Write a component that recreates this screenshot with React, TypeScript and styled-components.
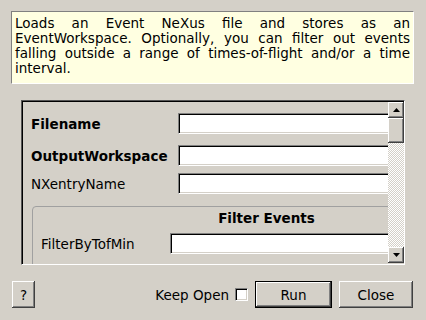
import React from 'react';
import styled, {createGlobalStyle, css} from 'styled-components';

const Global = createGlobalStyle`
  html, body {
    margin: 0;
    padding: 0;
    background: #d4d0c8;
  }
  * {
    box-sizing: border-box;
  }
`

const raised = css`
  background: #d4d0c8;
  border: none;
  box-shadow: inset -1px -1px #404040, inset 1px 1px #ffffff,
    inset -2px -2px #808080, inset 2px 2px #d4d0c8;
`

const sunken = css`
  background: #ffffff;
  border: 1px solid;
  border-color: #808080 #ffffff #ffffff #808080;
  box-shadow: inset 1px 1px #000000, inset -1px -1px #d4d0c8;
`

const Dialog = styled.div`
  width: 426px;
  height: 320px;
  padding: 11px 12px 0 11px;
  display: flex;
  flex-direction: column;
  font-family: "DejaVu Sans", Verdana, sans-serif;
  font-size: 13.5px;
  color: #000;
  overflow: hidden;
`

const Description = styled.div`
  height: 73px;
  padding: 4px 3px 0 3px;
  background: #ffffe1;
  border: 1px solid;
  border-color: #808080 #ffffff #ffffff #808080;
  line-height: 15px;
  text-align: justify;
`

const Frame = styled.div`
  margin: 16px 9px 0 10px;
  height: 165px;
  display: flex;
  border: 1px solid;
  border-color: #555555 #ffffff #ffffff #555555;
  box-shadow: inset 1px 1px #000000;
  padding: 1px 0 0 1px;
`

const Viewport = styled.div`
  flex: 1;
  overflow: hidden;
  padding: 11px 0 0 8px;
`

const Content = styled.div`
  width: 480px;
`

const Row = styled.div<{$top: number; $label: number}>`
  display: grid;
  grid-template-columns: ${p => p.$label}px 1fr;
  align-items: center;
  height: 21px;
  margin-top: ${p => p.$top}px;
`

const Label = styled.span<{$bold?: boolean}>`
  font-weight: ${p => (p.$bold ? 'bold' : 'normal')};
  white-space: nowrap;
`

const Field = styled.div`
  ${sunken};
  height: 21px;
`

const Group = styled.div`
  margin: 12px 0 0 1px;
  width: 469px;
  border: 1px solid #a0a0a0;
  border-radius: 4px;
  padding: 4px 0 0 8px;
  height: 80px;
`

const GroupTitle = styled.div`
  text-align: center;
  font-weight: bold;
  line-height: 15px;
  padding-right: 8px;
`

const ScrollBar = styled.div`
  width: 16px;
  display: flex;
  flex-direction: column;
  margin-bottom: 1px;
`

const ArrowButton = styled.div`
  ${raised};
  height: 16px;
  display: flex;
  align-items: center;
  justify-content: center;
`

const Thumb = styled.div`
  ${raised};
  height: 25px;
`

const Trough = styled.div`
  flex: 1;
  background: repeating-conic-gradient(#ffffff 0 25%, #d4d0c8 0 50%) 0 0 / 2px 2px;
`

const Buttons = styled.div`
  margin: 16px 1px 0 1px;
  display: flex;
  align-items: center;
`

const PushButton = styled.button<{$w: number; $left?: number; $default?: boolean}>`
  ${raised};
  width: ${p => p.$w}px;
  height: 27px;
  margin-left: ${p => p.$left ?? 0}px;
  font-family: inherit;
  font-size: 13.5px;
  color: #000;
  padding: 0;
  ${p =>
    p.$default &&
    css`
      box-shadow: inset 0 0 0 1px #000000, inset -2px -2px #404040,
        inset 2px 2px #ffffff, inset -3px -3px #808080;
    `}
`

const Spacer = styled.div`
  flex: 1;
`

const KeepOpen = styled.label`
  display: flex;
  align-items: center;
  gap: 6px;
  margin-right: 7px;
`

const Check = styled.span`
  ${sunken};
  width: 13px;
  height: 13px;
  display: inline-block;
`

function Arrow({down}: {down?: boolean}) {
  return (
    <svg width="7" height="4" viewBox="0 0 7 4">
      <path d={down ? 'M0 0h7L3.5 4z' : 'M0 4h7L3.5 0z'} fill="#000"/>
    </svg>
  );
}

export default function App() {
  return (
    <Dialog>
      <Global/>
      <Description>
        Loads an Event NeXus file and stores as an EventWorkspace. Optionally, you can filter out
        events falling outside a range of times-of-flight and/or a time interval.
      </Description>
      <Frame>
        <Viewport>
          <Content>
            <Row $top={0} $label={147}>
              <Label $bold>Filename</Label>
              <Field/>
            </Row>
            <Row $top={11} $label={147}>
              <Label $bold>OutputWorkspace</Label>
              <Field/>
            </Row>
            <Row $top={7} $label={147}>
              <Label>NXentryName</Label>
              <Field/>
            </Row>
            <Group>
              <GroupTitle>Filter Events</GroupTitle>
              <Row $top={7} $label={129}>
                <Label>FilterByTofMin</Label>
                <Field/>
              </Row>
            </Group>
          </Content>
        </Viewport>
        <ScrollBar>
          <ArrowButton><Arrow/></ArrowButton>
          <Thumb/>
          <Trough/>
          <ArrowButton><Arrow down/></ArrowButton>
        </ScrollBar>
      </Frame>
      <Buttons>
        <PushButton $w={23}>?</PushButton>
        <Spacer/>
        <KeepOpen>
          Keep Open
          <Check/>
        </KeepOpen>
        <PushButton $w={77} $default>Run</PushButton>
        <PushButton $w={74} $left={7}>Close</PushButton>
      </Buttons>
    </Dialog>
  );
}
